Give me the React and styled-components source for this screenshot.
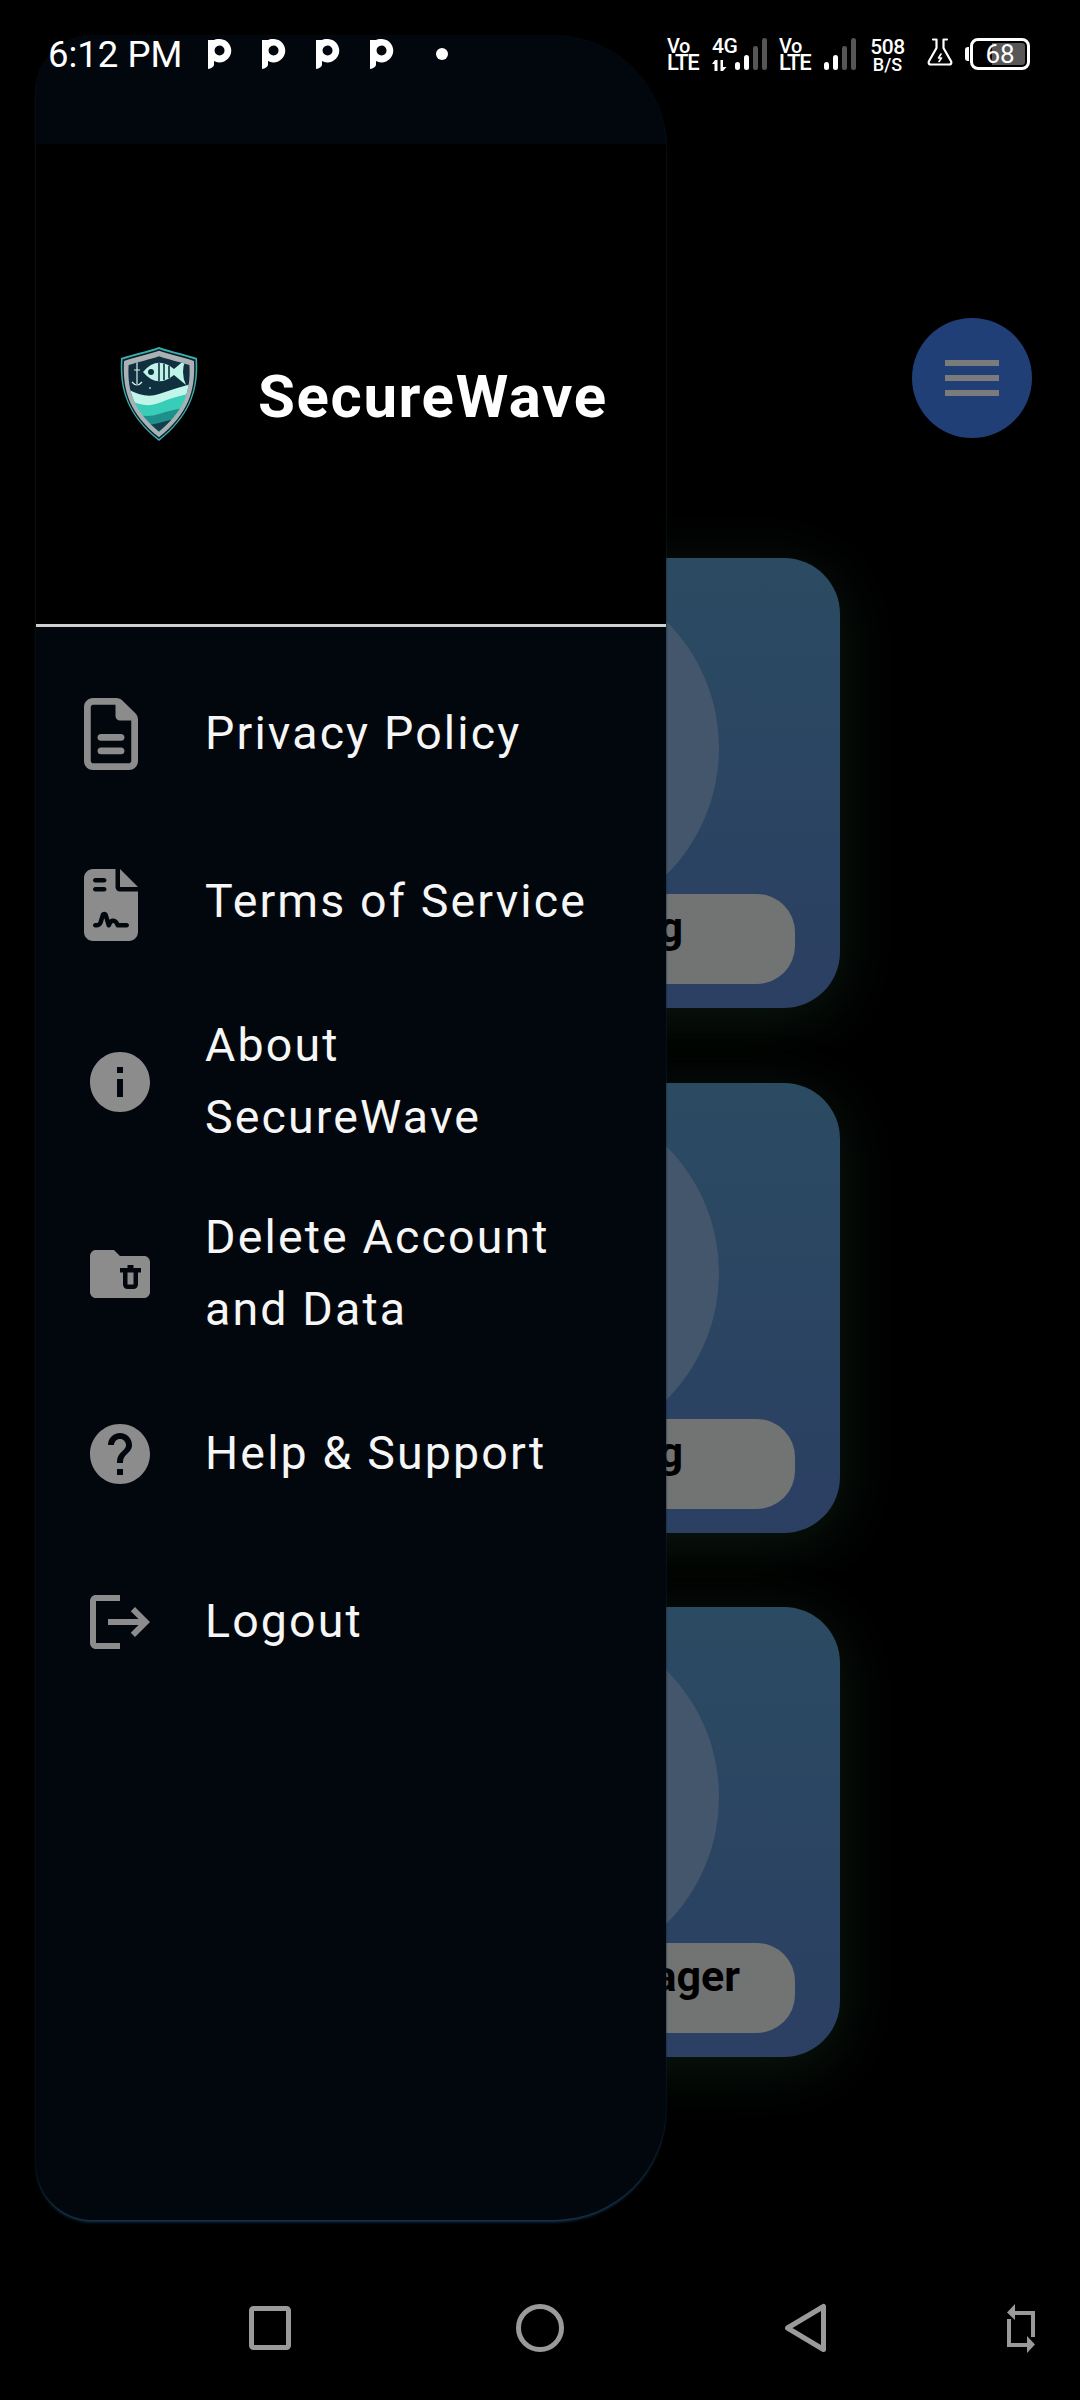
import React from 'react';
import styled, { createGlobalStyle } from 'styled-components';
import { FaRegFileLines, FaFileContract } from 'react-icons/fa6';
import { MdInfo, MdFolderDelete, MdHelp, MdLogout } from 'react-icons/md';

const GlobalStyle = createGlobalStyle`
    html, body {
        margin: 0;
        padding: 0;
        background: #000;
    }
    * {
        box-sizing: border-box;
    }
`;

const Screen = styled.div`
    position: relative;
    width: 1080px;
    height: 2400px;
    background: #000;
    overflow: hidden;
    display: flex;
    flex-direction: column;
    font-family: Roboto, "Liberation Sans", sans-serif;
`;

/* status bar */
const StatusBar = styled.div`
    position: relative;
    z-index: 2;
    height: 108px;
    padding: 38px 50px 0 48px;
    display: flex;
    align-items: flex-start;
    color: #fff;
`;

const Time = styled.span`
    font-size: 36.5px;
    font-weight: 400;
    line-height: 34px;
    width: 160px;
    white-space: nowrap;
`;

const PIcons = styled.div`
    display: flex;
    gap: 30px;
    margin-top: 1px;
`;

const NotifDot = styled.span`
    width: 12px;
    height: 12px;
    margin: 10px 0 0 42px;
    border-radius: 50%;
    background: #fff;
`;

const StatusRight = styled.div`
    margin-left: auto;
    display: flex;
    align-items: flex-start;
`;

const Stack = styled.div`
    width: ${p => p.$width}px;
    margin-left: ${p => p.$gap || 0}px;
    display: flex;
    flex-direction: column;
    align-items: ${p => p.$align || 'flex-start'};
    font-weight: 500;
    white-space: nowrap;
`;

const StackTop = styled.span`
    font-size: ${p => p.$size || 20}px;
    line-height: ${p => p.$height || 16}px;
    letter-spacing: -0.4px;
`;

const StackBottom = styled.span`
    font-size: ${p => p.$size || 22}px;
    line-height: ${p => p.$height || 17}px;
    letter-spacing: ${p => p.$spacing ?? -1.2}px;
`;

const ArrowSlot = styled.div`
    margin-top: 6px;
    display: flex;
`;

const Gap = styled.div`
    margin-left: ${p => p.$gap}px;
    display: flex;
`;

const Battery = styled.div`
    margin-left: 1px;
    width: 60px;
    height: 32px;
    padding: 2px;
    border: 3px solid #fff;
    border-radius: 8px;
    background: linear-gradient(to left, #585858 33px, transparent 33px) content-box;
    display: flex;
    align-items: center;
    justify-content: center;
    font-size: 26px;
    font-weight: 400;
    line-height: 22px;
`;

const BatteryNub = styled.span`
    margin: 9px 0 0 12px;
    width: 4px;
    height: 14px;
    border-radius: 3px 0 0 3px;
    background: #fff;
`;

/* page behind the drawer */
const MenuRow = styled.div`
    margin-top: 210px;
    padding-right: 48px;
    display: flex;
    justify-content: flex-end;
`;

const MenuButton = styled.div`
    width: 120px;
    height: 120px;
    border-radius: 50%;
    background: #213f77;
    display: flex;
    flex-direction: column;
    align-items: center;
    justify-content: center;
    gap: 9px;
`;

const MenuBar = styled.span`
    width: 54px;
    height: 6px;
    background: #7b7b7b;
`;

const Cards = styled.div`
    margin-top: 120px;
    display: flex;
    flex-direction: column;
    align-items: center;
    gap: 74.5px;
`;

const Card = styled.div`
    width: 600px;
    height: 450px;
    border-radius: 56px;
    background: linear-gradient(to bottom, #2b4b62, #2b3f62);
    box-shadow: 0 10px 60px rgba(50, 110, 70, 0.24);
    display: grid;
`;

const CardCircle = styled.div`
    grid-area: 1 / 1;
    justify-self: center;
    align-self: start;
    margin-top: 11px;
    width: 358px;
    height: 358px;
    border-radius: 50%;
    background: #44566b;
`;

const CardPill = styled.div`
    grid-area: 1 / 1;
    justify-self: center;
    align-self: end;
    margin-bottom: 24px;
    width: 510px;
    height: 90px;
    padding: 0 ${p => p.$inset}px 24px 0;
    border-radius: 38px;
    background: #717473;
    display: flex;
    align-items: center;
    justify-content: flex-end;
    color: #000;
    font-size: 43px;
    font-weight: 700;
`;

/* drawer */
const Drawer = styled.aside`
    position: absolute;
    z-index: 1;
    left: 36px;
    top: 36px;
    width: 630px;
    height: 2184px;
    border-radius: 56px 112px 112px 56px;
    background: #02070d;
    box-shadow: 0 3px 3px -1px #143a58, 0 0 2px #0a1c2c;
    overflow: hidden;
    display: flex;
    flex-direction: column;
`;

const DrawerHeader = styled.div`
    margin-top: 108px;
    height: 480px;
    padding: 20px 0 0 84px;
    background: #000;
    display: flex;
    align-items: center;
    gap: 60px;
`;

const DrawerTitle = styled.h1`
    margin: 4px 0 0;
    color: #fff;
    font-size: 60px;
    font-weight: 700;
    letter-spacing: 1.6px;
    white-space: nowrap;
`;

const Divider = styled.div`
    height: 3px;
    background: #cfcfcf;
`;

const MenuList = styled.nav`
    padding-top: 22px;
    display: flex;
    flex-direction: column;
`;

const MenuItem = styled.div`
    min-height: 168px;
    padding: 24px 60px 24px 48px;
    display: flex;
    align-items: center;
    gap: 49px;
`;

const MenuIcon = styled.span`
    flex: 0 0 72px;
    height: 72px;
    margin-top: ${p => p.$drop || 2}px;
    color: #8c8c8c;
    display: flex;
    svg {
        width: ${p => (p.$fa ? '54px' : '72px')};
        height: 72px;
    }
`;

const MenuLabel = styled.span`
    color: #f6f6f6;
    font-size: 46.5px;
    font-weight: 400;
    line-height: 72px;
    letter-spacing: 2.15px;
`;

/* android nav */
const NavBar = styled.div`
    margin-top: auto;
    height: 97px;
    padding-left: 249px;
    display: flex;
    align-items: flex-start;
`;

const NavSlot = styled.div`
    margin-left: ${p => p.$gap || 0}px;
    display: flex;
`;

function PIcon() {
    return (
        <svg width="24" height="30" viewBox="0 0 24 30">
            <path fill="#fff" d="M0 1 L6 1 A12 12 0 0 1 12 0 A11.7 11.7 0 1 1 6 22 L6 26 Q5 29 0 30 Z M11.5 6.5 A5 5 0 1 0 11.6 16.5 A5 5 0 1 0 11.5 6.5 Z" fillRule="evenodd" />
        </svg>
    );
}

function Signal() {
    const bars = [
        { x: 0, y: 24, h: 8, on: true },
        { x: 9, y: 17, h: 15, on: true },
        { x: 18, y: 8, h: 24, on: false },
        { x: 27, y: 0, h: 32, on: false },
    ];
    return (
        <svg width="32" height="32" viewBox="0 0 32 32">
            {bars.map(b => (
                <rect key={b.x} x={b.x} y={b.y} width="5" height={b.h} rx="2.5" fill={b.on ? '#fff' : '#565656'} />
            ))}
        </svg>
    );
}

function DataArrows() {
    return (
        <svg width="15" height="11" viewBox="0 0 15 11" fill="#fff">
            <path d="M2.5 11V4H0L3 0H5.5V11Z" />
            <path d="M8.5 0H11V7H14.5L11 11H8.5Z" />
        </svg>
    );
}

function Flask() {
    return (
        <svg width="26" height="28" viewBox="0 0 26 28" fill="none" stroke="#fff" strokeWidth="2.2" strokeLinejoin="round" strokeLinecap="round">
            <path d="M6 1.5H9.5V10L1.8 23.5Q1 26.5 4 26.5H22Q25 26.5 24.2 23.5L16.5 10V1.5H20" />
            <path d="M14 16L11.5 20H14.5L12 23.5" strokeWidth="1.6" />
        </svg>
    );
}

function Logo() {
    const shield = 'M39 1C50 5 65 8 77 12C79 45 70 70 39 95C8 70 -1 45 1 12C13 8 28 5 39 1Z';
    return (
        <svg width="78" height="96" viewBox="0 0 78 96" style={{ flexShrink: 0 }}>
            <defs>
                <clipPath id="inner">
                    <path d={shield} transform="translate(39 47) scale(0.8) translate(-39 -47)" />
                </clipPath>
            </defs>
            <path d={shield} fill="#3caeae" />
            <path d={shield} fill="#0b1d26" transform="translate(39 48) scale(0.96) translate(-39 -48)" />
            <path d={shield} fill="#a9b1b5" transform="translate(39 48) scale(0.92) translate(-39 -48)" />
            <g clipPath="url(#inner)">
                <rect width="78" height="96" fill="#11303f" />
                <path d="M0 38Q22 54 39 48T78 36V96H0Z" fill="#c2f5ea" />
                <path d="M0 48Q22 64 39 57T78 46V96H0Z" fill="#38cdb8" />
                <path d="M0 62Q22 74 39 68T78 60V96H0Z" fill="#1f8f8b" />
                <path d="M0 72Q22 82 39 77T78 70V96H0Z" fill="#133f4a" />
                <path d="M23 26Q37 9 54 23L66 13Q60 26 66 39L54 29Q37 43 23 26Z" fill="#bdf3e8" />
                <circle cx="31" cy="26" r="3" fill="#11303f" />
                <path d="M39 17V35M44 18V34M49 20V32" stroke="#11303f" strokeWidth="1.6" />
                <path d="M17 14V38M12 36Q17 42 22 36M14 24H20" stroke="#d6f2ec" strokeWidth="1.2" fill="none" />
                <circle cx="17" cy="14" r="1.8" fill="none" stroke="#d6f2ec" strokeWidth="1" />
                <circle cx="58" cy="12" r="1.5" fill="#6fd6cc" />
                <circle cx="30" cy="42" r="1.1" fill="#6fd6cc" />
            </g>
        </svg>
    );
}

function NavIcons() {
    return (
        <NavBar>
            <NavSlot>
                <svg width="42" height="50" viewBox="0 0 42 50" fill="none" stroke="#9a9a9a" strokeWidth="5">
                    <rect x="2.5" y="5.5" width="37" height="39" rx="2" />
                </svg>
            </NavSlot>
            <NavSlot $gap={225}>
                <svg width="48" height="50" viewBox="0 0 48 50" fill="none" stroke="#9a9a9a" strokeWidth="5">
                    <circle cx="24" cy="25" r="21.5" />
                </svg>
            </NavSlot>
            <NavSlot $gap={221}>
                <svg width="42" height="50" viewBox="0 0 42 50" fill="none" stroke="#9a9a9a" strokeWidth="5" strokeLinejoin="round">
                    <path d="M38.5 3.5V46.5L2.5 25Z" />
                </svg>
            </NavSlot>
            <NavSlot $gap={179}>
                <svg width="30" height="50" viewBox="0 0 30 50" fill="none" stroke="#9a9a9a" strokeWidth="4">
                    <path d="M7 10H27V34" />
                    <path d="M3 16V42H23" />
                    <path d="M9 1L1 9.5L9 17Z" fill="#9a9a9a" stroke="none" />
                    <path d="M21 33L29 41.5L21 50Z" fill="#9a9a9a" stroke="none" />
                </svg>
            </NavSlot>
        </NavBar>
    );
}

const menuItems = [
    { label: 'Privacy Policy', icon: <FaRegFileLines />, fa: true },
    { label: 'Terms of Service', icon: <FaFileContract />, fa: true, drop: 8 },
    { label: 'About SecureWave', icon: <MdInfo /> },
    { label: 'Delete Account and Data', icon: <MdFolderDelete /> },
    { label: 'Help & Support', icon: <MdHelp /> },
    { label: 'Logout', icon: <MdLogout /> },
];

const cards = [
    { label: 'g', inset: 112 },
    { label: 'g', inset: 112 },
    { label: 'nager', inset: 55 },
];

export default function App() {
    return (
        <Screen>
            <GlobalStyle />

            <StatusBar>
                <Time>6:12 PM</Time>
                <PIcons>
                    <PIcon />
                    <PIcon />
                    <PIcon />
                    <PIcon />
                </PIcons>
                <NotifDot />
                <StatusRight>
                    <Stack $width={30}>
                        <StackTop>Vo</StackTop>
                        <StackBottom>LTE</StackBottom>
                    </Stack>
                    <Stack $width={23} $gap={15}>
                        <StackTop $size={21}>4G</StackTop>
                        <ArrowSlot>
                            <DataArrows />
                        </ArrowSlot>
                    </Stack>
                    <Signal />
                    <Stack $width={30} $gap={12}>
                        <StackTop>Vo</StackTop>
                        <StackBottom>LTE</StackBottom>
                    </Stack>
                    <Gap $gap={15}>
                        <Signal />
                    </Gap>
                    <Stack $width={33} $gap={15} $align="center">
                        <StackTop $size={21} $height={19}>508</StackTop>
                        <StackBottom $size={18} $height={15} $spacing={0}>B/S</StackBottom>
                    </Stack>
                    <Gap $gap={23}>
                        <Flask />
                    </Gap>
                    <BatteryNub />
                    <Battery>68</Battery>
                </StatusRight>
            </StatusBar>

            <MenuRow>
                <MenuButton>
                    <MenuBar />
                    <MenuBar />
                    <MenuBar />
                </MenuButton>
            </MenuRow>

            <Cards>
                {cards.map((c, i) => (
                    <Card key={i}>
                        <CardCircle />
                        <CardPill $inset={c.inset}>{c.label}</CardPill>
                    </Card>
                ))}
            </Cards>

            <Drawer>
                <DrawerHeader>
                    <Logo />
                    <DrawerTitle>SecureWave</DrawerTitle>
                </DrawerHeader>
                <Divider />
                <MenuList>
                    {menuItems.map(item => (
                        <MenuItem key={item.label}>
                            <MenuIcon $fa={item.fa} $drop={item.drop}>{item.icon}</MenuIcon>
                            <MenuLabel>{item.label}</MenuLabel>
                        </MenuItem>
                    ))}
                </MenuList>
            </Drawer>

            <NavIcons />
        </Screen>
    );
}
